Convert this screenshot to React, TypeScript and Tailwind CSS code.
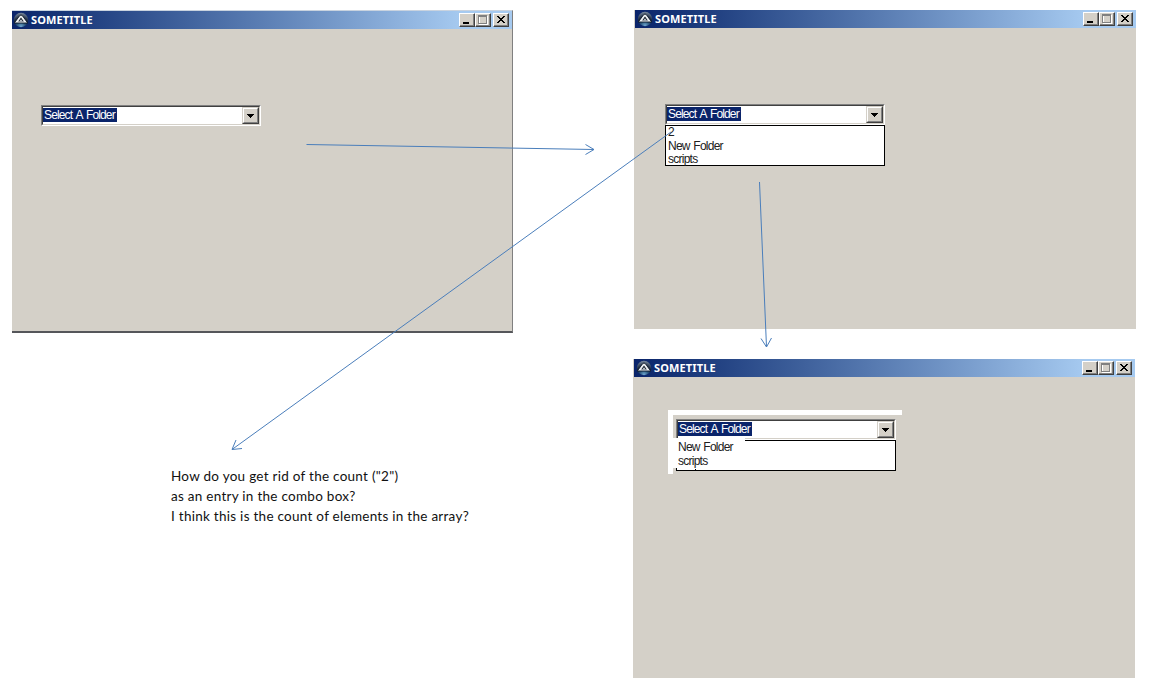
import type { ReactNode } from "react";

function AppIcon() {
  return (
    <svg width="16" height="16" viewBox="0 0 16 16" className="shrink-0">
      <defs>
        <radialGradient id="orb" cx="50%" cy="95%" r="95%">
          <stop offset="0" stopColor="#6fa6cf" />
          <stop offset="0.3" stopColor="#2d5a80" />
          <stop offset="0.6" stopColor="#14233a" />
          <stop offset="1" stopColor="#7b8b9f" />
        </radialGradient>
      </defs>
      <circle cx="8" cy="8" r="7.2" fill="url(#orb)" />
      <path d="M1.300 11 6.600 3.700Q8 2.300 9.400 3.700L14.700 11Z" fill="#eceff2" stroke="#0c1626" strokeWidth="0.9" />
      <path d="M5.200 9.400 8 5.600 10.800 9.400Z" fill="#111a26" />
      <path d="M6.200 9.400 8 7.200 9.800 9.400Z" fill="#c4cad2" />
    </svg>
  );
}

function CaptionButton({ children }: { children: ReactNode }) {
  return (
    <div className="h-[14px] w-4 border border-t-white border-l-white border-r-[#404040] border-b-[#404040] bg-[#d4d0c8]">
      <div className="h-3 w-[14px] border-r border-b border-[#808080]">
        <svg width="13" height="11" viewBox="0 0 13 11" shapeRendering="crispEdges" className="block">
          {children}
        </svg>
      </div>
    </div>
  );
}

function TitleBar() {
  return (
    <div className="flex h-[18px] items-center bg-linear-to-r from-[#0a246a] to-[#a6caf0] to-90% pr-[3px] pl-px">
      <AppIcon />
      <span className="ml-[2px] flex-1 font-['Noto_Sans',sans-serif] text-[11px] leading-[18px] font-bold tracking-[0.13px] text-white">
        SOMETITLE
      </span>
      <div className="flex">
        <CaptionButton>
          <rect x="3" y="8" width="6" height="2" fill="#000" />
        </CaptionButton>
        <CaptionButton>
          <path d="M3 2h9v9H3z M4 3v7h7V3z" fillRule="evenodd" fill="#fff" />
          <path d="M2 1h9v9H2z M3 3v6h7V3z" fillRule="evenodd" fill="#808080" />
        </CaptionButton>
        <div className="ml-[2px]">
          <CaptionButton>
            <path
              d="M3 2h2v1h1v1h2V3h1V2h2v1h-1v1H9v1H8v1h1v1h1v1h1v1H9V8H8V7H6v1H5v1H3V8h1V7h1V6h1V5H5V4H4V3H3z"
              fill="#000"
            />
          </CaptionButton>
        </div>
      </div>
    </div>
  );
}

function Combo() {
  return (
    <div className="h-[21px] w-[220px] border border-t-[#808080] border-l-[#808080] border-r-white border-b-white">
      <div className="flex h-[19px] border border-t-[#404040] border-l-[#404040] border-r-[#d4d0c8] border-b-[#d4d0c8] bg-white">
        <div className="flex flex-1 items-start pt-px">
          <span className="h-[14px] w-[74px] overflow-hidden bg-[#0a246a] pl-px text-[12px] leading-[14px] tracking-[-0.86px] whitespace-nowrap text-white [word-spacing:1.5px]">
            Select A Folder
          </span>
        </div>
        <div className="h-[17px] w-[17px] border border-t-[#d4d0c8] border-l-[#d4d0c8] border-r-[#404040] border-b-[#404040] bg-[#d4d0c8]">
          <div className="flex h-[15px] w-[15px] items-center border border-t-white border-l-white border-r-[#808080] border-b-[#808080] pl-[3px]">
            <svg width="7" height="4" viewBox="0 0 7 4" shapeRendering="crispEdges">
              <path d="M0 0h7v1H6v1H5v1H4v1H3V3H2V2H1V1H0z" fill="#000" />
            </svg>
          </div>
        </div>
      </div>
    </div>
  );
}

const item = "h-[13.5px] text-[12px] leading-[13.5px] tracking-[-0.75px] [word-spacing:1px] text-[#202020]";

export default function App() {
  return (
    <main className="relative h-[683px] w-[1151px] overflow-hidden bg-white font-['Liberation_Sans',Arial,sans-serif]">
      <section className="absolute top-[10px] left-[12px] h-[323px] w-[501px] border-t border-r border-b-2 border-t-[#c9d3df] border-r-[#808080] border-b-[#55565a] bg-[#d4d0c8]">
        <TitleBar />
        <div className="pt-[76px] pl-[29px]">
          <Combo />
        </div>
      </section>

      <section className="absolute top-[10px] left-[634px] h-[319px] w-[502px] bg-[#d4d0c8]">
        <div className="ml-px bg-[#0a246a] pl-px">
          <TitleBar />
        </div>
        <div className="pt-[76px] pl-[31px]">
          <Combo />
          <div className="h-[41px] w-[220px] border border-black bg-white pl-[2px]">
            <div className={item}>2</div>
            <div className={item}>New Folder</div>
            <div className={item}>scripts</div>
          </div>
        </div>
      </section>

      <section className="absolute top-[359px] left-[633px] h-[319px] w-[502px] bg-[#d4d0c8]">
        <div className="ml-px bg-[#0a246a] pl-px">
          <TitleBar />
        </div>
        <div className="mt-[33px] ml-[35px] h-[64px] w-[234px] border-t-[5px] border-white">
          <div className="flex">
            <div className="h-[59px] w-[5px] bg-white" />
            <div className="pt-1 pl-[3px]">
              <Combo />
              <div className="h-[31px] w-[220px] border border-black bg-white pl-px">
                <div className={item}>New Folder</div>
                <div className={item}>scripts</div>
              </div>
            </div>
          </div>
        </div>
      </section>

      <div className="absolute top-[438px] left-[673px] h-[3px] w-[72px] bg-white" />
      <div className="absolute top-[438px] left-[673px] h-[30px] w-[4px] bg-white" />
      <div className="absolute top-[469px] left-[695px] h-px w-px bg-black" />

      <p className="absolute top-[466px] left-[171px] font-['Lato',Calibri,sans-serif] text-[13.5px] leading-5 tracking-[0.27px] whitespace-nowrap text-[#111]">
        How do you get rid of the count ("2")
        <br />
        as an entry in the combo box?
        <br />I think this is the count of elements in the array?
      </p>

      <svg
        width="1151"
        height="683"
        viewBox="0 0 1151 683"
        fill="none"
        stroke="#4a7ebb"
        className="pointer-events-none absolute inset-0"
      >
        <path d="M306.500 144.500 594 149.500M585.500 144.500 594 149.500 585.500 154.500" />
        <path d="M671 132 232 449.500M236 440 232 449.500 242 448.500" />
        <path d="M759.500 182 766.500 347M761 338.500 766.500 347 771.500 338" />
      </svg>
    </main>
  );
}
